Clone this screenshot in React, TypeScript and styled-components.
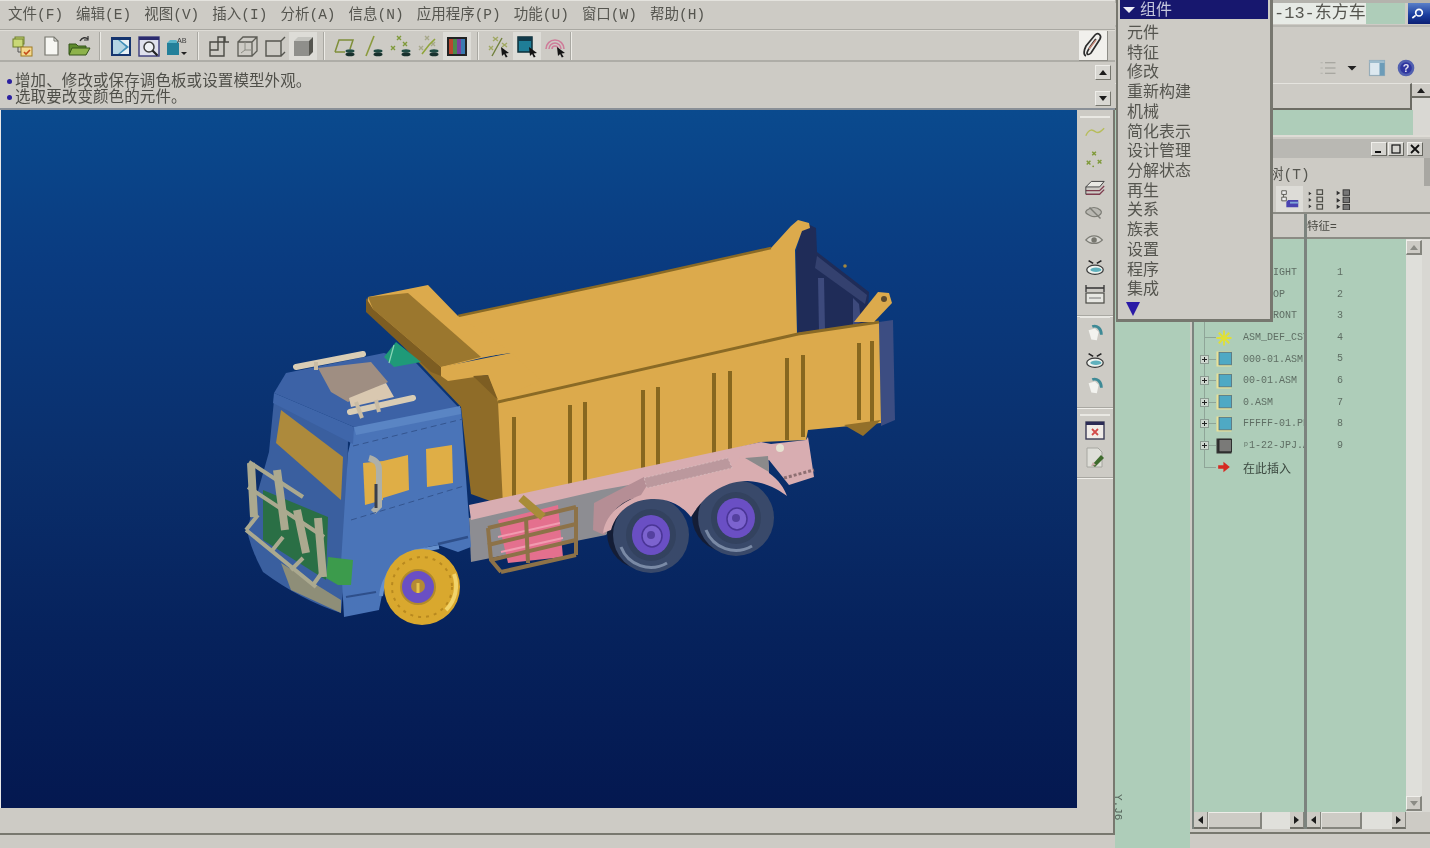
import React from "react";
import styled, { createGlobalStyle } from "styled-components";

const CJK = `"Liberation Sans", "Noto Sans CJK SC", "Noto Sans CJK TC", sans-serif`;
const MONO = `"Liberation Mono", "Noto Sans CJK SC", monospace`;
const GRAY = "#cdcbc5";
const GREEN = "#aecdb9";
const EDGE = "#78786f";

const Global = createGlobalStyle`
  html, body { margin: 0; padding: 0; background: ${GRAY}; }
  * { box-sizing: border-box; }
`;

const Root = styled.div`
  position: relative;
  width: 1430px;
  height: 848px;
  overflow: hidden;
  display: flex;
  background: ${GRAY};
  font-family: ${CJK};
  color: #4b4b46;
  filter: blur(0.6px);
`;
const LeftCol = styled.div`
  width: 1115px;
  flex: none;
  display: flex;
  flex-direction: column;
`;
const RightCol = styled.div`
  flex: 1;
  display: flex;
  flex-direction: column;
  min-width: 0;
`;

/* menu bar */
const MenuBar = styled.div`
  height: 30px;
  flex: none;
  display: flex;
  align-items: center;
  gap: 13px;
  padding-left: 8px;
  border-top: 1px solid #e4e3de;
  border-bottom: 1px solid #a9a8a2;
`;
const MenuItem = styled.span`
  font-family: ${MONO};
  font-size: 14.5px;
  line-height: 20px;
  color: #55554f;
  white-space: nowrap;
`;

/* top toolbar */
const ToolBar = styled.div`
  height: 32px;
  flex: none;
  display: flex;
  align-items: center;
  padding-left: 9px;
  border-bottom: 2px solid #aeada7;
  border-top: 1px solid #dedcd6;
`;
const ToolGroup = styled.div`
  display: flex;
  align-items: center;
`;
const ToolSep = styled.div`
  width: 2px;
  height: 28px;
  margin: 0 6px;
  background: #a9a8a2;
  border-right: 1px solid #ecebe6;
`;
const ToolEnd = styled(ToolSep)`
  margin-left: 1px;
`;
const ToolBtn = styled.div<{ $on?: boolean }>`
  width: 28px;
  height: 28px;
  display: flex;
  align-items: center;
  justify-content: center;
  background: ${(p) => (p.$on ? "#dddcd7" : "transparent")};
`;
const PenBtn = styled.div`
  margin-left: auto;
  margin-right: 7px;
  width: 29px;
  height: 30px;
  display: flex;
  align-items: center;
  justify-content: center;
  background: #f1f0ec;
  border-right: 1px solid #8e8d87;
  border-bottom: 1px solid #8e8d87;
`;

/* message area */
const MessageArea = styled.div`
  height: 48px;
  flex: none;
  display: flex;
  justify-content: space-between;
  padding: 3px 4px 2px 6px;
  border-bottom: 2px solid #8a9097;
`;
const Messages = styled.div`
  padding-top: 8px;
  display: flex;
  flex-direction: column;
`;
const Msg = styled.div`
  display: flex;
  align-items: center;
  gap: 3px;
  height: 16px;
  font-size: 15.5px;
  line-height: 16px;
  letter-spacing: 0.1px;
  color: #4f4f49;
  white-space: nowrap;
`;
const Dot = styled.i`
  width: 5px;
  height: 5px;
  border-radius: 50%;
  background: #2a1fa0;
  flex: none;
  margin-left: 1px;
`;
const MsgScroll = styled.div`
  width: 16px;
  display: flex;
  flex-direction: column;
  justify-content: space-between;
`;
const ScrollBtn = styled.div`
  width: 16px;
  height: 15px;
  display: flex;
  align-items: center;
  justify-content: center;
  background: #d8d7d2;
  border-top: 1px solid #eeede9;
  border-left: 1px solid #eeede9;
  border-right: 1px solid #77776f;
  border-bottom: 1px solid #77776f;
`;
const TriUp = styled.i`
  border-left: 4px solid transparent;
  border-right: 4px solid transparent;
  border-bottom: 5px solid #1c1c1c;
`;
const TriDown = styled.i`
  border-left: 4px solid transparent;
  border-right: 4px solid transparent;
  border-top: 5px solid #1c1c1c;
`;
const TriLeft = styled.i`
  border-top: 4px solid transparent;
  border-bottom: 4px solid transparent;
  border-right: 5px solid #1c1c1c;
`;
const TriRight = styled.i`
  border-top: 4px solid transparent;
  border-bottom: 4px solid transparent;
  border-left: 5px solid #1c1c1c;
`;

/* workspace */
const Workspace = styled.div`
  flex: none;
  height: 725px;
  display: flex;
  align-items: flex-start;
  border-bottom: 2px solid ${EDGE};
  border-right: 2px solid ${EDGE};
`;
const Viewport = styled.div`
  width: 1077px;
  height: 698px;
  flex: none;
  border-left: 1px solid #e8e8e8;
  background: linear-gradient(180deg, #0a4a8e 0%, #0a3b80 22%, #0a2f6c 50%, #06225c 75%, #041850 100%);
`;
const TruckSvg = styled.svg`
  display: block;
  width: 1076px;
  height: 698px;
`;
const SideBar = styled.div`
  flex: 1;
  display: flex;
  flex-direction: column;
`;
const SideGroup = styled.div<{ $top: number; $bottom: number }>`
  display: flex;
  flex-direction: column;
  align-items: center;
  padding-top: ${(p) => p.$top}px;
  padding-bottom: ${(p) => p.$bottom}px;
  border-bottom: 1px solid #a9a8a2;
  box-shadow: 0 1px 0 #efeee9;
  &::before {
    content: "";
    width: 30px;
    height: 2px;
    background: #e9e8e3;
    margin-bottom: 1px;
  }
`;
const SideBtn = styled.div`
  width: 26px;
  height: 26.9px;
  display: flex;
  align-items: center;
  justify-content: center;
`;

/* right column */
const TitleRow = styled.div`
  height: 25px;
  flex: none;
  display: flex;
  justify-content: flex-end;
  border-top: 3px solid #b4b3ad;
`;
const TitleField = styled.div`
  width: 133px;
  height: 21px;
  background: ${GREEN};
  flex: none;
`;
const TitleText = styled.span`
  display: inline-block;
  height: 21px;
  padding-left: 2px;
  background: #e7ebe6;
  font-family: ${MONO};
  font-size: 17px;
  line-height: 21px;
  color: #55554f;
  white-space: nowrap;
`;
const SearchBtn = styled.div`
  width: 22px;
  height: 21px;
  margin-left: 3px;
  display: flex;
  align-items: center;
  justify-content: center;
  background: linear-gradient(180deg, #5a80c8 0%, #1c3fa0 55%, #0b1f74 100%);
`;
const ToolsArea = styled.div`
  height: 58px;
  flex: none;
  display: flex;
  align-items: center;
  justify-content: flex-end;
  gap: 9px;
  padding: 26px 14px 0 0;
  border-top: 2px solid #b9b8b2;
`;
const FieldRow = styled.div`
  height: 27px;
  flex: none;
  display: flex;
`;
const RaisedField = styled.div`
  flex: 1;
  border-top: 1px solid #e5e4df;
  border-right: 2px solid #6c6c64;
  border-bottom: 2px solid #6c6c64;
`;
const FieldScroll = styled.div`
  width: 18px;
  display: flex;
  flex-direction: column;
  background: #d9d8d3;
`;
const FieldBtn = styled.div`
  height: 15px;
  display: flex;
  align-items: center;
  justify-content: center;
  background: ${GRAY};
  border-top: 1px solid #eeede9;
  border-bottom: 2px solid #6c6c64;
`;
const Body = styled.div`
  flex: 1;
  display: flex;
  min-height: 0;
`;
const GreenStrip = styled.div`
  width: 75px;
  flex: none;
  background: ${GREEN};
  display: flex;
  flex-direction: column;
  justify-content: flex-end;
  padding-bottom: 28px;
`;
const StripNote = styled.span`
  writing-mode: vertical-rl;
  align-self: flex-start;
  margin-left: -2px;
  font-family: ${MONO};
  font-size: 11px;
  line-height: 9px;
  color: #56645b;
`;
const TreePane = styled.div`
  flex: 1;
  display: flex;
  flex-direction: column;
  min-width: 0;
`;
const GreenBand = styled.div`
  height: 25px;
  display: flex;
  flex: none;
`;
const GreenBandFill = styled.div`
  flex: 1;
  background: ${GREEN};
`;
const BandSide = styled.div`
  width: 17px;
  background: #d9d8d3;
`;
const TreeWindow = styled.div`
  flex: 1;
  display: flex;
  flex-direction: column;
  border-top: 2px solid #dedcd6;
  min-height: 0;
`;
const WinTitle = styled.div`
  height: 19px;
  flex: none;
  margin-top: 2px;
  display: flex;
  justify-content: flex-end;
  align-items: center;
  gap: 1px;
  padding-right: 7px;
  background: #b9b8b3;
`;
const WinBtn = styled.div<{ $gap?: boolean }>`
  width: 16px;
  height: 14px;
  margin-left: ${(p) => (p.$gap ? "2px" : 0)};
  display: flex;
  align-items: center;
  justify-content: center;
  background: #d5d4cf;
  border-top: 1px solid #f0efeb;
  border-left: 1px solid #f0efeb;
  border-right: 1px solid #66665f;
  border-bottom: 1px solid #66665f;
`;
const WinMenu = styled.div`
  height: 28px;
  flex: none;
  display: flex;
  align-items: center;
  justify-content: space-between;
  padding-left: 79px;
`;
const WinMenuText = styled.span`
  font-family: ${MONO};
  font-size: 14.5px;
  color: #55554f;
`;
const WinMenuEnd = styled.i`
  width: 6px;
  height: 28px;
  background: #a8a7a2;
`;
const WinTools = styled.div`
  height: 28px;
  flex: none;
  display: flex;
  align-items: center;
  padding-left: 86px;
  border-bottom: 2px solid #8b8b84;
`;
const WinTool = styled.div<{ $on?: boolean }>`
  width: 27px;
  height: 26px;
  display: flex;
  align-items: center;
  justify-content: center;
  background: ${(p) => (p.$on ? "#dddcd7" : "transparent")};
`;
const Table = styled.div`
  flex: 1;
  display: grid;
  grid-template-columns: 110px 1fr;
  margin-left: 2px;
  min-height: 0;
  border-left: 2px solid #7c837e;
`;
const Column = styled.div`
  display: flex;
  flex-direction: column;
  min-width: 0;
  & + & {
    border-left: 3px solid #7c837e;
  }
`;
const ColHead = styled.div`
  height: 25px;
  flex: none;
  padding-left: 0;
  font-size: 11.5px;
  line-height: 24px;
  color: #4a4a44;
  border-bottom: 2px solid #8b8b84;
`;
const ColBody = styled.div`
  flex: 1;
  display: flex;
  min-height: 0;
  background: ${GREEN};
`;
const Rows = styled.div`
  flex: 1;
  min-width: 0;
  padding-top: 23px;
  overflow: hidden;
`;
const TreeRow = styled.div`
  height: 21.6px;
  display: flex;
  align-items: center;
  white-space: nowrap;
`;
const Gutter = styled.div<{ $last?: boolean }>`
  width: 22px;
  height: 100%;
  flex: none;
  display: flex;
  align-items: center;
  justify-content: center;
  background:
    linear-gradient(#8fa598, #8fa598) 10px ${(p) => (p.$last ? "top / 1px 50%" : "top / 1px 100%")} no-repeat,
    linear-gradient(#8fa598, #8fa598) 10px center / 12px 1px no-repeat;
`;
const Expand = styled.i`
  width: 9px;
  height: 9px;
  margin-right: 1px;
  border: 1px solid #8c9c92;
  background: linear-gradient(#222, #222) center / 5px 1px no-repeat,
    linear-gradient(#222, #222) center / 1px 5px no-repeat, #cfd8d0;
`;
const TreeIcon = styled.div`
  width: 16px;
  height: 16px;
  flex: none;
  display: flex;
  align-items: center;
  justify-content: center;
  margin-right: 11px;
`;
const TreeLabel = styled.span<{ $cjk?: boolean }>`
  font-family: ${(p) => (p.$cjk ? CJK : MONO)};
  font-size: ${(p) => (p.$cjk ? "12px" : "10px")};
  color: ${(p) => (p.$cjk ? "#3c4a41" : "#5f6e64")};
`;
const NumRow = styled.div`
  height: 21.6px;
  padding-left: 30px;
  font-family: ${MONO};
  font-size: 10px;
  line-height: 21.6px;
  color: #5f6e64;
`;
const VSide = styled.div`
  width: 16px;
  flex: none;
  background: #dfdfda;
  display: flex;
  flex-direction: column;
  justify-content: space-between;
  padding: 1px 0;
`;
const VMargin = styled.div`
  width: 8px;
  flex: none;
  background: #d8d7d2;
`;
const VBtn = styled.div`
  height: 15px;
  display: flex;
  align-items: center;
  justify-content: center;
  background: ${GRAY};
  border-top: 1px solid #f0efeb;
  border-left: 1px solid #f0efeb;
  border-right: 2px solid #85857e;
  border-bottom: 2px solid #85857e;
`;
const TriUpSoft = styled(TriUp)`
  border-bottom-color: #8b8b85;
`;
const TriDownSoft = styled(TriDown)`
  border-top-color: #8b8b85;
`;
const HScroll = styled.div`
  height: 17px;
  flex: none;
  display: flex;
  align-items: stretch;
  background: #e0e0db;
`;
const HArrow = styled.div`
  width: 14px;
  flex: none;
  display: flex;
  align-items: center;
  justify-content: center;
  background: ${GRAY};
  border-bottom: 2px solid #6f6f68;
  border-right: 1px solid #85857e;
`;
const HThumb = styled.div<{ $w: number }>`
  width: ${(p) => p.$w}px;
  flex: none;
  margin-left: 1px;
  background: ${GRAY};
  border-top: 1px solid #eeede9;
  border-right: 2px solid #85857e;
  border-bottom: 2px solid #85857e;
`;
const HGap = styled.div`
  flex: 1;
`;
const HEnd = styled.div<{ $w: number }>`
  width: ${(p) => p.$w}px;
  flex: none;
  background: ${GRAY};
`;
const WinFooter = styled.div`
  height: 16px;
  flex: none;
  border-top: 2px solid ${EDGE};
  margin-top: 3px;
`;

/* popup menu */
const Popup = styled.div`
  position: absolute;
  left: 1116px;
  top: -4px;
  width: 157px;
  height: 326px;
  padding: 2px;
  background: ${GRAY};
  border: 2px solid #77776f;
  border-right-width: 3px;
  border-bottom-width: 3px;
  display: flex;
  flex-direction: column;
`;
const PopupHead = styled.div`
  height: 19px;
  flex: none;
  display: flex;
  align-items: center;
  gap: 5px;
  padding-left: 3px;
  background: #17176e;
  font-size: 16px;
  line-height: 17px;
  color: #c4c6dc;
`;
const PopupHeadTri = styled.i`
  border-left: 6px solid transparent;
  border-right: 6px solid transparent;
  border-top: 6px solid #eeeef6;
`;
const PopupList = styled.div`
  padding: 4px 0 0 7px;
  display: flex;
  flex-direction: column;
`;
const PopupItem = styled.div`
  height: 19.72px;
  font-size: 16px;
  line-height: 19.72px;
  color: #55554f;
`;
const PopupMore = styled.i`
  margin: 3px 0 0 -1px;
  width: 0;
  border-left: 7px solid transparent;
  border-right: 7px solid transparent;
  border-top: 14px solid #2a1aa6;
`;
const Ico = styled.svg`
  display: block;
  flex: none;
`;

const I: React.FC<{ s?: number; children: React.ReactNode }> = ({ s = 24, children }) => (
  <Ico width={s} height={s} viewBox="0 0 24 24">
    {children}
  </Ico>
);

const Spool = ({ x = 17, y = 19 }: { x?: number; y?: number }) => (
  <g>
    <ellipse cx={x} cy={y - 2} rx="4.5" ry="1.8" fill="#1f4a42" />
    <ellipse cx={x} cy={y + 1.4} rx="4.5" ry="1.8" fill="#17302c" />
  </g>
);
const Xs = ({ c = "#7f9a3a" }: { c?: string }) => (
  <g stroke={c} strokeWidth="1.4" fill="none">
    <path d="M8 2l4 4M12 2L8 6M14 8l4 4M18 8l-4 4M2 12l4 4M6 12l-4 4" />
  </g>
);
const Cursor = () => <path d="M14 13l8 6-3.4.4 2 3.4-1.8.8-1.7-3.5L15 22z" fill="#141414" />;

const topGroups: React.ReactNode[][] = [
  [
    <I key="a">
      <rect x="4" y="3" width="9" height="7" fill="#c9d877" stroke="#6e7f2c" />
      <rect x="2" y="5" width="10" height="8" fill="#c9d877" stroke="#6e7f2c" />
      <rect x="10" y="13" width="11" height="9" fill="#f3d98e" stroke="#a07b22" />
      <path d="M13 18l2 2 4-4" stroke="#c44a1a" strokeWidth="1.6" fill="none" />
      <path d="M7 13v5h3" stroke="#555" fill="none" />
    </I>,
    <I key="b">
      <path d="M6 3h9l4 4v14H6z" fill="#f7f7f3" stroke="#77776f" strokeWidth="1.2" />
      <path d="M15 3v4h4" fill="none" stroke="#77776f" />
    </I>,
    <I key="c">
      <path d="M2 10h7l2 2h8v8H2z" fill="#5d8a2b" stroke="#35551a" />
      <path d="M5 14h18l-4 7H2z" fill="#8db24a" stroke="#35551a" />
      <path d="M13 7c2-4 6-4 8-2" stroke="#333" fill="none" strokeWidth="1.4" />
      <path d="M21 2v4h-4" stroke="#333" fill="none" strokeWidth="1.2" />
    </I>,
  ],
  [
    <I key="d">
      <rect x="2" y="3" width="20" height="19" fill="#16356f" />
      <rect x="4" y="6" width="16" height="14" fill="#e8f1f6" />
      <path d="M4 6h7l9 7-9 7H4z" fill="#3f8fb8" />
      <path d="M4 6h5l8 7-8 7H4z" fill="#dcebf2" opacity=".75" />
    </I>,
    <I key="e">
      <rect x="2" y="3" width="20" height="19" fill="#dfe0ec" stroke="#3a3a7a" strokeWidth="1.4" />
      <rect x="2" y="3" width="20" height="3" fill="#2b2b6e" />
      <circle cx="12" cy="13" r="5" fill="#eef0f4" stroke="#3c3c3c" strokeWidth="1.5" />
      <path d="M15.5 16.5l5 5" stroke="#222" strokeWidth="2.2" />
    </I>,
    <I key="f">
      <path d="M2 9h12v12H2z" fill="#23809a" />
      <path d="M2 9l3-3h6l3 3z" fill="#59b3c7" />
      <text x="12" y="9" fontSize="8" fontFamily="Liberation Mono" fill="#444">AB</text>
      <path d="M16 18h6l-3 3z" fill="#222" />
    </I>,
  ],
  [
    <I key="g">
      <path d="M3 8h14v14H3zM3 8h8V3h7v5h4M11 8v8H3M17 3v13" fill="none" stroke="#4a4a44" strokeWidth="1.4" />
    </I>,
    <I key="h">
      <path d="M3 8h14v14H3zM17 8l5-5M17 22l5-5v-14H8L3 8" fill="none" stroke="#5c5c55" strokeWidth="1.3" />
      <path d="M10 8v8h7M10 16l-4 3" fill="none" stroke="#8c8c84" />
    </I>,
    <I key="i">
      <path d="M3 7h15v15H3zM18 7l4-4M18 22l4-4" fill="none" stroke="#55554f" strokeWidth="1.4" />
    </I>,
    <I key="j">
      <path d="M3 7h15v15H3z" fill="#8f8f8b" />
      <path d="M3 7l4-4h15l-4 4z" fill="#c4c4bf" />
      <path d="M18 7l4-4v15l-4 4z" fill="#55554f" />
    </I>,
  ],
  [
    <I key="k">
      <path d="M2 18l4-12h14l-3 9" fill="none" stroke="#7f8f3a" strokeWidth="1.5" />
      <path d="M2 18h10" stroke="#7f8f3a" strokeWidth="1.5" />
      <Spool />
    </I>,
    <I key="l">
      <path d="M5 22L13 2" stroke="#8b9a3c" strokeWidth="1.6" />
      <Spool />
    </I>,
    <I key="m">
      <Xs />
      <Spool />
    </I>,
    <I key="n">
      <Xs c="#a7a88a" />
      <path d="M5 20l7-9 6-6" stroke="#90a53a" strokeWidth="1.6" fill="none" />
      <Spool />
    </I>,
    <I key="o">
      <rect x="2" y="3" width="20" height="19" fill="#222" />
      <rect x="4" y="5" width="4" height="15" fill="#b8462e" />
      <rect x="8" y="5" width="4" height="15" fill="#4c8a4c" />
      <rect x="12" y="5" width="4" height="15" fill="#7a3f9c" />
      <rect x="16" y="5" width="4" height="15" fill="#3a7ab0" />
    </I>,
  ],
  [
    <I key="p">
      <path d="M6 3l5 4M11 3L6 7M15 9l5 4M20 9l-5 4M2 12l4 4M6 12l-4 4" stroke="#a0a862" strokeWidth="1.4" />
      <path d="M5 22L15 4" stroke="#6f7f3a" strokeWidth="1.4" />
      <Cursor />
    </I>,
    <I key="q">
      <rect x="3" y="3" width="14" height="15" fill="#1f7d97" stroke="#0d2f3a" strokeWidth="1.5" />
      <rect x="3" y="3" width="14" height="4" fill="#123a4a" />
      <Cursor />
    </I>,
    <I key="r">
      <path d="M3 15a9 9 0 0 1 18 0M6 15a6 6 0 0 1 12 0M9 15a3 3 0 0 1 6 0" fill="none" stroke="#cf7d9a" strokeWidth="1.6" />
      <Cursor />
    </I>,
  ],
];

const Arc = () => (
  <I s={22}>
    <path d="M5 9l7-2 4 4-2 9-6-1z" fill="#f3f3ef" />
    <path d="M9 5c5-2 10 2 10 9" fill="none" stroke="#3e8a96" strokeWidth="3" />
  </I>
);
const Glasses = () => (
  <I s={22}>
    <path d="M5 5l5 3M19 5l-5 3" stroke="#222" strokeWidth="1.8" />
    <ellipse cx="12" cy="15" rx="9" ry="5" fill="#eef2ee" stroke="#3c3c3c" strokeWidth="1.4" />
    <ellipse cx="13" cy="15" rx="6" ry="2.5" fill="#5fb1bd" />
  </I>
);
const sideGroups: { top: number; bottom: number; icons: React.ReactNode[] }[] = [
  {
    top: 6,
    bottom: 8,
    icons: [
      <I key="a" s={22}><path d="M2 16c4-9 8-6 11-4s6-1 9-4" stroke="#b7bd5a" strokeWidth="1.5" fill="none" /></I>,
      <I key="b" s={22}>
        <path d="M9 4l4 4M13 4L9 8M3 14l4 4M7 14l-4 4M15 13l4 4M19 13l-4 4" stroke="#7f9a3a" strokeWidth="1.6" />
        <circle cx="10" cy="20" r="1" fill="#7f9a3a" />
      </I>,
      <I key="c" s={22}>
        <path d="M2 13l6-6h14l-5 6z" fill="#e9e9e4" stroke="#3a3a3a" />
        <path d="M2 17l15 0 5-5M2 21h15l5-5" fill="none" stroke="#7d3c4e" strokeWidth="1.4" />
        <path d="M2 13v8" stroke="#3a3a3a" />
      </I>,
      <I key="d" s={22}>
        <path d="M3 9c5-4 11-4 15 0s-5 9-11 6S1 11 3 9z" fill="#b9b8b2" stroke="#7d7d76" strokeWidth="1.3" />
        <path d="M6 6l12 12" stroke="#7d7d76" strokeWidth="1.5" />
      </I>,
      <I key="e" s={22}>
        <path d="M2 12c5-6 13-6 18 0-5 5-13 5-18 0z" fill="#d8d7d2" stroke="#7d7d76" strokeWidth="1.3" />
        <circle cx="11" cy="12" r="3" fill="#77776f" />
      </I>,
      <Glasses key="f" />,
      <I key="g" s={24}>
        <path d="M3 3v7M21 3v7M3 6h18" stroke="#333" strokeWidth="1.3" />
        <rect x="3" y="11" width="18" height="10" fill="#e7e7e2" stroke="#4a4a44" strokeWidth="1.2" />
        <path d="M6 16h12" stroke="#777" />
      </I>,
    ],
  },
  { top: 0, bottom: 7, icons: [<Arc key="a" />, <Glasses key="b" />, <Arc key="c" />] },
  {
    top: 6,
    bottom: 6,
    icons: [
      <I key="a">
        <rect x="3" y="4" width="18" height="17" fill="#f0ece8" stroke="#3b3b55" strokeWidth="1.4" />
        <rect x="3" y="4" width="18" height="3" fill="#2b2b55" />
        <path d="M9 11l6 6M15 11l-6 6" stroke="#d24a4a" strokeWidth="1.8" />
      </I>,
      <I key="b">
        <path d="M4 3h11l4 4v15H4z" fill="#deded8" stroke="#a6a6a0" />
        <path d="M9 20l9-10 3 3-9 9z" fill="#3e6b2c" />
        <path d="M8 21l2-4 3 3z" fill="#caa" />
      </I>,
    ],
  },
];

const Cube = ({ dark }: { dark?: boolean }) => (
  <I s={20}>
    <rect x="3" y="3" width="18" height="18" fill={dark ? "#333" : "#e8e29a"} />
    <rect x="6" y="4" width="15" height="15" fill={dark ? "#7a7a78" : "#4fa9c4"} stroke={dark ? "#222" : "#55707c"} strokeWidth="1" />
  </I>
);

const Plane = () => (
  <I s={14}>
    <path d="M3 3v18l6-6 12-12z" fill="#d0d488" />
  </I>
);

const treeRows: { n: string; icon?: React.ReactNode; plus?: boolean; cjk?: boolean; last?: boolean; num?: number }[] = [
  { n: "ASM_RIGHT", num: 1, icon: <Plane /> },
  { n: "ASM_TOP", num: 2, icon: <Plane /> },
  { n: "ASM_FRONT", num: 3, icon: <Plane /> },
  {
    n: "ASM_DEF_CSYS",
    num: 4,
    icon: (
      <I s={18}>
        <path d="M12 2v20M2 12h20M5 5l14 14M19 5L5 19" stroke="#dfe036" strokeWidth="2.4" />
      </I>
    ),
  },
  { n: "000-01.ASM", num: 5, icon: <Cube />, plus: true },
  { n: "00-01.ASM", num: 6, icon: <Cube />, plus: true },
  { n: "0.ASM", num: 7, icon: <Cube />, plus: true },
  { n: "FFFFF-01.PRT", num: 8, icon: <Cube />, plus: true },
  { n: "ᵖ1-22-JPJ.ASM", num: 9, icon: <Cube dark />, plus: true },
  {
    n: "在此插入",
    cjk: true,
    last: true,
    icon: (
      <I s={14}>
        <path d="M2 9h9V3l11 9-11 9v-6H2z" fill="#d62a22" />
      </I>
    ),
  },
];

const ribs: [number, number, number][] = [
  [513, 417, 498], [569, 405, 487], [584, 402, 485], [642, 390, 472], [657, 387, 468],
  [713, 373, 457], [729, 371, 455], [786, 358, 440], [802, 355, 437], [858, 343, 420], [871, 341, 423],
];

const Wheel = ({ cx, cy }: { cx: number; cy: number }) => (
  <g>
    <ellipse cx={cx - 8} cy={cy - 2} rx="36" ry="36" fill="#141d36" />
    <ellipse cx={cx} cy={cy} rx="38" ry="38" fill="#39496a" />
    <path d={`M${cx - 30} ${cy + 12}A32 32 0 0 0 ${cx + 16} ${cy + 28}`} fill="none" stroke="#7a8aa6" strokeWidth="3" />
    <ellipse cx={cx} cy={cy} rx="25" ry="26" fill="#33425f" />
    <ellipse cx={cx} cy={cy} rx="19" ry="20" fill="#6a4fc4" />
    <ellipse cx={cx + 1} cy={cy + 1} rx="10" ry="11" fill="#7c63cf" stroke="#4a3596" strokeWidth="1.5" />
    <circle cx={cx} cy={cy} r="4" fill="#54409f" />
  </g>
);

const Truck = () => (
  <TruckSvg viewBox="0 110 1076 698">
    {/* tailgate */}
    <polygon points="795,252 803,222 815,228 816,252 868,292 866,326 797,338" fill="#1f2c58" />
    <polygon points="816,256 866,295 864,304 814,268" fill="#34416f" />
    <polygon points="817,278 823,278 824,330 818,332" fill="#3d4a7c" />
    <polygon points="852,298 858,304 860,322 852,326" fill="#3d4a7c" />
    <polygon points="878,322 892,320 894,420 880,426" fill="#3c4d82" />
    {/* front bulkhead */}
    <polygon points="387,330 440,373 473,377 487,380 500,402 503,506 470,494 460,407" fill="#8f6c28" />
    {/* inner far wall */}
    <polygon points="457,316 640,277 770,248 790,226 797,220 808,223 809,228 801,231 794,250 796,334 497,402 487,376 510,353 480,357" fill="#dcaa4c" />
    <path d="M457,316 L640,277 L770,248" fill="none" stroke="#8a6a25" strokeWidth="2.5" />
    {/* canopy */}
    <polygon points="367,297 427,285 457,316 510,352 480,358 440,368 365,310" fill="#dcaa4c" />
    <polygon points="367,297 407,293 480,357 440,367 372,309" fill="#9b772e" />
    <polygon points="365,298 372,309 440,367 440,376 430,372 365,312" fill="#7d5d22" />
    <polygon points="440,367 510,353 540,380 497,400 487,375 447,381 440,376" fill="#dcaa4c" />
    <polygon points="472,376 487,375 497,400" fill="#7d5d22" />
    {/* near wall */}
    <polygon points="497,402 797,333 878,322 880,423 807,430 805,440 760,442 502,506" fill="#dcaa4c" />
    <path d="M497,402 L797,334 L878,322" fill="none" stroke="#8a6a25" strokeWidth="3" />
    {ribs.map(([x, a, b]) => (
      <path key={x} d={`M${x} ${a}L${x} ${b}`} stroke="#87671f" strokeWidth="4" />
    ))}
    <polygon points="843,425 880,420 862,436" fill="#93702a" />
    {/* right horn */}
    <polygon points="853,322 877,292 888,293 891,303 873,322" fill="#dcaa4c" />
    <circle cx="883" cy="299" r="3" fill="#5c4a2e" />
    <circle cx="844" cy="266" r="1.8" fill="#a3873e" />
    {/* chassis */}
    <polygon points="468,518 640,478 642,492 605,535 470,562" fill="#8d8d92" />
    <polygon points="468,505 760,442 770,444 805,440 807,437 813,477 788,485 768,460 600,490 470,520" fill="#d8adb1" />
    <polygon points="593,503 643,477 648,490 623,508 603,535 592,530" fill="#b58e95" />
    <Wheel cx={650} cy={535} />
    <Wheel cx={735} cy={518} />
    <path
      d="M602 533 C604 518 615 504 640 495 L645 487 L730 467 L740 456 L767 455 L768 473 C778 480 783 488 786 496 C778 490 765 482 747 481 C725 481 705 492 690 517 C680 504 665 498 650 499 C630 500 615 512 610 530 Z"
      fill="#d9adb0"
    />
    <polygon points="643,478 727,458 731,468 646,488" fill="#bb989d" stroke="#d9c0c2" strokeWidth=".7" strokeDasharray="2 2" />
    <polygon points="744,458 767,456 768,472" fill="#8b8a8b" />
    <circle cx="779" cy="448" r="4" fill="#e6e2d0" />
    <path d="M783 478l30-8" stroke="#8e6f72" strokeWidth="3" strokeDasharray="3 2" />
    {/* fuel crate */}
    <polygon points="497,520 557,505 562,557 507,563" fill="#e4708e" />
    <path d="M497 537l62-14M500 552l62-14" stroke="#f19cb0" strokeWidth="2" />
    <g stroke="#8d7248" strokeWidth="4" fill="none">
      <path d="M487 528l88-21M487 545l88-21M490 560l85-20M500 572l75-17" />
      <path d="M487 528l3 32 10 12M525 518l2 45M575 507v48" />
    </g>
    <path d="M520 498l22 19" stroke="#a88c38" strokeWidth="8" />
    {/* cab */}
    <path d="M273 400 L347 440 L345 560 L340 613 Q300 600 262 572 Q250 550 246 530 L268 452 Z" fill="#3a5f9f" />
    <path d="M347 453 L353 427 L460 408 L470 547 L457 552 L437 545 Q398 550 382 590 L378 610 L343 617 L340 563 Z" fill="#4a74b8" />
    <polygon points="285,373 383,353 415,363 460,410 353,427 273,393" fill="#3c62a6" />
    <polygon points="273,393 353,427 352,444 272,403" fill="#3f66aa" />
    <polygon points="353,427 459,406 460,414 355,435" fill="#5a85c4" />
    <polygon points="280,410 342,457 340,500 275,443" fill="#ad8a3c" />
    <polygon points="362,463 382,461 382,500 364,505" fill="#dfae46" />
    <polygon points="382,461 407,455 408,490 382,498" fill="#dfae46" />
    <polygon points="425,449 451,445 452,483 426,487" fill="#dfae46" />
    <path d="M368 458c7 2 10 5 10 12v36l-6 6" fill="none" stroke="#aeb0a8" strokeWidth="6" />
    <path d="M375 484v24" stroke="#3a3f4a" strokeWidth="3" />
    <path d="M350 520l113-34M352 446l110-27" stroke="#34558f" strokeWidth="1" strokeDasharray="6 4" />
    <path d="M437 544l30-7" stroke="#2e4f8a" strokeWidth="2.5" />
    <path d="M345 597l30-5" stroke="#2e4f8a" strokeWidth="2" />
    <path d="M380 596c2-18 14-36 32-44l26-5" fill="none" stroke="#6690cc" strokeWidth="4" />
    {/* roof rack */}
    <polygon points="317,368 370,362 387,382 347,402 330,392" fill="#9f8e82" />
    <polygon points="348,398 385,383 393,397 350,407" fill="#d9c8b0" />
    <path d="M295 367L362 354" stroke="#d9cdb5" strokeWidth="6" strokeLinecap="round" />
    <path d="M349 412L412 398" stroke="#d9cdb5" strokeWidth="6" strokeLinecap="round" />
    <path d="M315 362v8M355 402l6 16M375 400l3 12" stroke="#c9bca4" strokeWidth="4" />
    {/* wedge */}
    <polygon points="383,357 395,342 420,362 393,367" fill="#1f9a78" />
    <path d="M393 345l-5 18" stroke="#8cd6b8" strokeWidth="1.2" />
    {/* grille */}
    <polygon points="262,490 327,517 325,580 262,540" fill="#2a6f45" />
    <polygon points="280,563 340,600 340,613 290,590" fill="#8e8e78" />
    <polygon points="327,557 352,560 350,585 337,585 325,578" fill="#3c9b4c" />
    <g stroke="#aba98f" fill="none">
      <path d="M248 462L302 497M247 487L323 537M245 530L315 587" strokeWidth="4" />
      <path d="M250 463L253 517M276 470L284 530M296 510L305 553M317 518L322 577" strokeWidth="8" />
      <path d="M245 530l12-15M270 552l12-15M290 570l12-12M312 585l10-14" strokeWidth="4" />
    </g>
    {/* front wheel */}
    <circle cx="421" cy="587" r="38" fill="#d9a82e" />
    <circle cx="421" cy="587" r="30" fill="none" stroke="#b8891f" strokeWidth="2" strokeDasharray="3 5" />
    <path d="M445 610a34 34 0 0 0 8-36" fill="none" stroke="#f2d46a" strokeWidth="4" />
    <circle cx="417" cy="587" r="17" fill="#6a4fc4" stroke="#b08a2c" strokeWidth="2" />
    <circle cx="417" cy="586" r="7" fill="#b48a34" />
    <path d="M417 583v10" stroke="#e6c24c" strokeWidth="3" />
  </TruckSvg>
);

export default function App() {
  const menus = ["文件(F)", "编辑(E)", "视图(V)", "插入(I)", "分析(A)", "信息(N)", "应用程序(P)", "功能(U)", "窗口(W)", "帮助(H)"];
  const items = ["元件", "特征", "修改", "重新构建", "机械", "简化表示", "设计管理", "分解状态", "再生", "关系", "族表", "设置", "程序", "集成"];
  const onButtons = new Set(["2-3", "3-4", "4-1"]);
  return (
    <Root>
      <Global />
      <LeftCol>
        <MenuBar>
          {menus.map((m) => (
            <MenuItem key={m}>{m}</MenuItem>
          ))}
        </MenuBar>
        <ToolBar>
          {topGroups.map((g, i) => (
            <React.Fragment key={i}>
              {i > 0 && <ToolSep />}
              <ToolGroup>
                {g.map((ic, j) => (
                  <ToolBtn key={j} $on={onButtons.has(`${i}-${j}`)}>
                    {ic}
                  </ToolBtn>
                ))}
              </ToolGroup>
            </React.Fragment>
          ))}
          <ToolEnd />
          <PenBtn>
            <Ico width="26" height="28" viewBox="0 0 26 28">
              <path d="M6 25c-3-1-2-6 0-10L15 4c3-3 7 0 5 4L11 22c-2 2-4 2-4 0 0-2 7-12 9-14" fill="none" stroke="#2c2c2c" strokeWidth="1.7" />
              <path d="M9 18l7-9" stroke="#c98a7a" strokeWidth="1.4" />
            </Ico>
          </PenBtn>
        </ToolBar>
        <MessageArea>
          <Messages>
            <Msg><Dot />增加、修改或保存调色板或设置模型外观。</Msg>
            <Msg><Dot />选取要改变颜色的元件。</Msg>
          </Messages>
          <MsgScroll>
            <ScrollBtn><TriUp /></ScrollBtn>
            <ScrollBtn><TriDown /></ScrollBtn>
          </MsgScroll>
        </MessageArea>
        <Workspace>
          <Viewport>
            <Truck />
          </Viewport>
          <SideBar>
            {sideGroups.map((g, i) => (
              <SideGroup key={i} $top={g.top} $bottom={g.bottom}>
                {g.icons.map((ic, j) => (
                  <SideBtn key={j}>{ic}</SideBtn>
                ))}
              </SideGroup>
            ))}
          </SideBar>
        </Workspace>
      </LeftCol>
      <RightCol>
        <TitleRow>
          <TitleField>
            <TitleText>-13-东方车</TitleText>
          </TitleField>
          <SearchBtn>
            <I s={16}>
              <circle cx="12" cy="10" r="5" fill="none" stroke="#fff" strokeWidth="2.5" />
              <path d="M7 14l-5 4" stroke="#fff" strokeWidth="2.5" />
            </I>
          </SearchBtn>
        </TitleRow>
        <ToolsArea>
          <I s={18}>
            <path d="M8 5h14M8 12h14M8 19h14" stroke="#9c9c95" strokeWidth="1.5" />
            <path d="M2 5h3M2 12h3M2 19h3" stroke="#b3b3ac" strokeWidth="1.5" />
          </I>
          <I s={12}><path d="M3 8h18l-9 9z" fill="#222" /></I>
          <I s={20}>
            <rect x="3" y="3" width="18" height="18" fill="#dce8ef" stroke="#97adb9" strokeWidth="1.4" />
            <rect x="15" y="3" width="6" height="18" fill="#6c9cb8" />
            <rect x="3" y="3" width="18" height="3" fill="#9dbccd" />
          </I>
          <I s={20}>
            <circle cx="12" cy="12" r="10" fill="#5160b0" />
            <circle cx="12" cy="12" r="7" fill="#2f36a0" />
            <text x="12" y="17" fontSize="13" fontFamily="Liberation Sans" fontWeight="700" fill="#e4e4f2" textAnchor="middle">?</text>
          </I>
        </ToolsArea>
        <FieldRow>
          <RaisedField />
          <FieldScroll>
            <FieldBtn><TriUp /></FieldBtn>
          </FieldScroll>
        </FieldRow>
        <Body>
          <GreenStrip>
            <StripNote>Y.J6</StripNote>
          </GreenStrip>
          <TreePane>
            <GreenBand>
              <GreenBandFill />
              <BandSide />
            </GreenBand>
            <TreeWindow>
              <WinTitle>
                <WinBtn><Ico width="10" height="10" viewBox="0 0 10 10"><path d="M1 8h6" stroke="#111" strokeWidth="2" /></Ico></WinBtn>
                <WinBtn><Ico width="10" height="10" viewBox="0 0 10 10"><rect x="1" y="1" width="8" height="8" fill="none" stroke="#111" strokeWidth="1.2" /></Ico></WinBtn>
                <WinBtn $gap><Ico width="10" height="10" viewBox="0 0 10 10"><path d="M1 1l8 8M9 1L1 9" stroke="#111" strokeWidth="1.8" /></Ico></WinBtn>
              </WinTitle>
              <WinMenu>
                <WinMenuText>树(T)</WinMenuText>
                <WinMenuEnd />
              </WinMenu>
              <WinTools>
                <WinTool $on>
                  <I s={22}>
                    <path d="M3 3h5v4H3zM3 10h5v4H3zM5 7v3" stroke="#55554f" fill="#eee" />
                    <path d="M10 13h11v8H8v-6z" fill="#4a43b0" />
                    <path d="M12 16h9" stroke="#7fa6d8" strokeWidth="2" />
                  </I>
                </WinTool>
                <WinTool>
                  <I s={22}>
                    <path d="M3 4l3 2-3 2zM3 11l3 2-3 2zM3 18l3 2-3 2" fill="#333" />
                    <rect x="12" y="2" width="6" height="5" fill="none" stroke="#4d4d47" strokeWidth="1.3" />
                    <rect x="12" y="10" width="6" height="5" fill="none" stroke="#4d4d47" strokeWidth="1.3" />
                    <rect x="12" y="18" width="6" height="5" fill="none" stroke="#4d4d47" strokeWidth="1.3" />
                  </I>
                </WinTool>
                <WinTool>
                  <I s={22}>
                    <path d="M4 3l4 2.5L4 8zM4 11l4 2.5L4 16zM4 18l4 2.5L4 23z" fill="#333" />
                    <rect x="11" y="2" width="7" height="6" fill="#777" stroke="#333" />
                    <rect x="11" y="10" width="7" height="6" fill="#777" stroke="#333" />
                    <rect x="11" y="18" width="7" height="6" fill="#777" stroke="#333" />
                  </I>
                </WinTool>
              </WinTools>
              <Table>
                <Column>
                  <ColHead />
                  <ColBody>
                    <Rows>
                      {treeRows.map((r) => (
                        <TreeRow key={r.n}>
                          <Gutter $last={r.last}>{r.plus && <Expand />}</Gutter>
                          <TreeIcon>{r.icon}</TreeIcon>
                          <TreeLabel $cjk={r.cjk}>{r.n}</TreeLabel>
                        </TreeRow>
                      ))}
                    </Rows>
                  </ColBody>
                  <HScroll>
                    <HArrow><TriLeft /></HArrow>
                    <HThumb $w={53} />
                    <HGap />
                    <HArrow><TriRight /></HArrow>
                  </HScroll>
                </Column>
                <Column>
                  <ColHead>特征=</ColHead>
                  <ColBody>
                    <Rows>
                      {treeRows.filter((r) => r.num).map((r) => (
                        <NumRow key={r.n}>{r.num}</NumRow>
                      ))}
                    </Rows>
                    <VSide>
                      <VBtn><TriUpSoft /></VBtn>
                      <VBtn><TriDownSoft /></VBtn>
                    </VSide>
                    <VMargin />
                  </ColBody>
                  <HScroll>
                    <HArrow><TriLeft /></HArrow>
                    <HThumb $w={40} />
                    <HGap />
                    <HArrow><TriRight /></HArrow>
                    <HEnd $w={24} />
                  </HScroll>
                </Column>
              </Table>
              <WinFooter />
            </TreeWindow>
          </TreePane>
        </Body>
      </RightCol>
      <Popup>
        <PopupHead>
          <PopupHeadTri />
          组件
        </PopupHead>
        <PopupList>
          {items.map((t) => (
            <PopupItem key={t}>{t}</PopupItem>
          ))}
          <PopupMore />
        </PopupList>
      </Popup>
    </Root>
  );
}
